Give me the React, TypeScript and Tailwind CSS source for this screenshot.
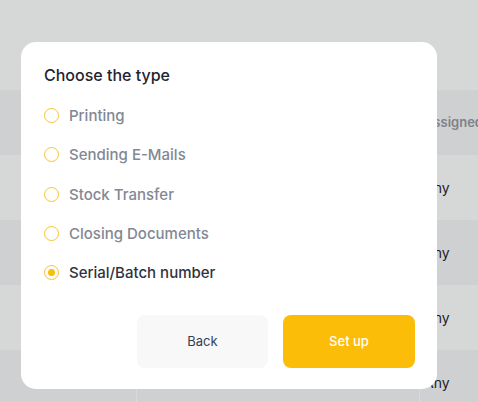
import React, { useState } from "react";

const options = [
  "Printing",
  "Sending E-Mails",
  "Stock Transfer",
  "Closing Documents",
  "Serial/Batch number",
];

function Row({ dark, children, header }: { dark: boolean; children?: React.ReactNode; header?: boolean }) {
  return (
    <div className={`flex h-[65px] ${dark ? "bg-[#cfd0d1]" : "bg-[#d6d7d7]"}`}>
      <div className="w-[137px] border-r border-[#d9dadb]" />
      <div className="w-[283px] border-r border-[#d9dadb]" />
      <div
        className={`flex-1 flex items-center pl-[4px] whitespace-nowrap overflow-hidden ${
          header ? "text-[13px] font-semibold text-[#7e8188]" : "text-[14px] text-[#1b1e2c]"
        }`}
      >
        {children}
      </div>
    </div>
  );
}

export default function App() {
  const [selected, setSelected] = useState(4);
  return (
    <div
      className="relative w-[478px] h-[402px] overflow-hidden bg-[#d6d7d7]"
      style={{ fontFamily: "Inter, 'Noto Sans', sans-serif" }}
    >
      <div className="h-[90px] bg-[#d6d7d7]" />
      <Row dark header>Assigned</Row>
      <Row dark={false}>Any</Row>
      <Row dark>Any</Row>
      <Row dark={false}>Any</Row>
      <Row dark>Any</Row>

      <div className="absolute left-[21px] top-[42px] w-[416px] h-[347px] bg-white rounded-[15px] pl-[23px] pr-[22px] pt-[21px] box-border">
        <h2 className="text-[16px] leading-[24px] font-medium text-[#1f2430]">Choose the type</h2>
        <div className="mt-[9px] flex flex-col">
          {options.map((o, i) => {
            const on = i === selected;
            return (
              <button
                key={o}
                onClick={() => setSelected(i)}
                className="h-[39.3px] flex items-center gap-[10px] text-left"
              >
                <span className="w-[15px] h-[15px] rounded-full border-[1.5px] border-[#f9c22e] flex items-center justify-center box-border">
                  {on && <span className="w-[7px] h-[7px] rounded-full bg-[#fbbd08]" />}
                </span>
                <span
                  className={`text-[15px] font-medium leading-none ${
                    on ? "text-[#2f3341]" : "text-[#828894]"
                  }`}
                >
                  {o}
                </span>
              </button>
            );
          })}
        </div>
        <div className="mt-[23px] flex justify-end gap-[15px]">
          <button className="w-[131px] h-[53px] rounded-[8px] bg-[#f8f8f8] text-[13px] text-[#374151]">
            Back
          </button>
          <button className="w-[132px] h-[53px] rounded-[8px] bg-[#fbbd08] text-[13px] font-medium text-white">
            Set up
          </button>
        </div>
      </div>
    </div>
  );
}
